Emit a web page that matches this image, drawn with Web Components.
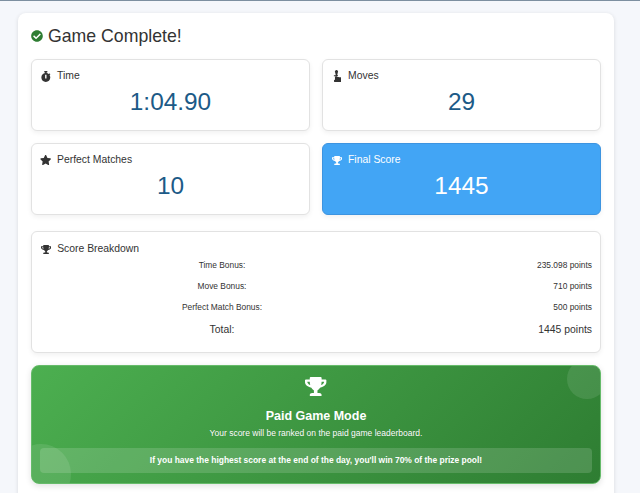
<!DOCTYPE html>
<html>
<head>
<meta charset="utf-8">
<title>Game Complete</title>
<style>
  html, body { margin: 0; height: 493px; overflow: hidden; }
  body {
    background: #f5f7fb;
    border-top: 1px solid #7d8fa0;
    font-family: "Liberation Sans", Arial, sans-serif;
    color: #333;
  }
</style>
</head>
<body>
<game-summary>
  <span slot="title">Game Complete!</span>
  <stat-card icon="stopwatch" label="Time" value="1:04.90"></stat-card>
  <stat-card icon="joystick" label="Moves" value="29"></stat-card>
  <stat-card icon="star" label="Perfect Matches" value="10"></stat-card>
  <stat-card icon="trophy" label="Final Score" value="1445" highlight></stat-card>
  <score-breakdown slot="after">
    <score-row label="Time Bonus:" value="235.098 points"></score-row>
    <score-row label="Move Bonus:" value="710 points"></score-row>
    <score-row label="Perfect Match Bonus:" value="500 points"></score-row>
    <score-row label="Total:" value="1445 points" total></score-row>
  </score-breakdown>
  <paid-banner slot="after">
    <span slot="title">Paid Game Mode</span>
    <span slot="subtitle">Your score will be ranked on the paid game leaderboard.</span>
    If you have the highest score at the end of the day, you'll win 70% of the prize pool!
  </paid-banner>
</game-summary>

<script>
const ICONS = {
  check: ['0 0 512 512', 'M504 256c0 136.967-111.033 248-248 248S8 392.967 8 256 119.033 8 256 8s248 111.033 248 248zM227.314 387.314l184-184c6.248-6.248 6.248-16.379 0-22.627l-22.627-22.627c-6.248-6.249-16.379-6.249-22.628 0L216 308.118l-70.059-70.059c-6.248-6.248-16.379-6.248-22.628 0l-22.627 22.627c-6.248 6.248-6.248 16.379 0 22.627l104 104c6.249 6.249 16.379 6.249 22.628.001z'],
  stopwatch: ['0 0 448 512', 'M432 304c0 114.9-93.1 208-208 208S16 418.9 16 304c0-104 76.3-190.2 176-205.5V64h-28c-6.6 0-12-5.4-12-12V12c0-6.6 5.4-12 12-12h120c6.6 0 12 5.4 12 12v40c0 6.6-5.4 12-12 12h-28v34.5c37.5 5.8 71.7 21.6 99.7 44.6l27.5-27.5c4.7-4.7 12.3-4.7 17 0l28.3 28.3c4.7 4.7 4.7 12.3 0 17l-29.4 29.4-.6.6C419.7 223.3 432 262.2 432 304zm-176 36V188.5c0-6.6-5.4-12-12-12h-40c-6.6 0-12 5.4-12 12V340c0 6.6 5.4 12 12 12h40c6.6 0 12-5.4 12-12z'],
  joystick: ['0 0 80 110', 'M30 0a16 16 0 0 1 12 27v9h-2v11h6v10H34v7h12c4 0 7 1 9 3h15c5 0 8 4 8 8v27c0 5-3 8-8 8H14c-3 0-5-3-5-6v-8c0-4 3-7 7-7h2V64h4v-7H8V47h16V36h-2v-9A16 16 0 0 1 30 0z'],
  star: ['0 0 576 512', 'M259.3 17.8L194 150.2 47.9 171.5c-26.2 3.8-36.7 36.1-17.7 54.6l105.7 103-25 145.5c-4.5 26.3 23.2 46 46.4 33.7L288 439.6l130.7 68.7c23.2 12.2 50.9-7.4 46.4-33.7l-25-145.5 105.7-103c19-18.5 8.5-50.8-17.7-54.6L382 150.2 316.7 17.8c-11.7-23.6-45.6-23.9-57.4 0z'],
  trophy: ['0 0 576 512', 'M552 64H448V24c0-13.3-10.7-24-24-24H152c-13.3 0-24 10.7-24 24v40H24C10.7 64 0 74.7 0 88v56c0 35.7 22.5 72.4 61.9 100.7 31.5 22.7 69.8 37.1 110 41.7C203.3 338.5 240 360 240 360v72h-48c-35.3 0-64 20.7-64 56v12c0 6.6 5.4 12 12 12h296c6.6 0 12-5.4 12-12v-12c0-35.3-28.7-56-64-56h-48v-72s36.7-21.5 68.1-73.6c40.3-4.6 78.7-19 110-41.7 39.3-28.3 61.9-65 61.9-100.7V88c0-13.3-10.7-24-24-24zM99.3 192.8C74.9 175.2 64 155.6 64 144v-16h64.2c1 32.6 5.8 61.2 12.8 86.2-15.1-5.2-29.2-12.4-41.7-21.4zM512 144c0 16.1-17.7 36.1-35.3 48.8-12.5 9-26.7 16.2-41.8 21.4 7-25 11.8-53.6 12.8-86.2H512v16z']
};
const ICON_HEIGHT = { stopwatch: 11, joystick: 12, star: 10, trophy: 9 };

function iconSvg(name, height, color) {
  const [box, d] = ICONS[name];
  return `<svg viewBox="${box}" height="${height}" fill="${color}" style="display:block;flex:none"><path d="${d}"/></svg>`;
}

class GameSummary extends HTMLElement {
  constructor() {
    super();
    this.attachShadow({ mode: "open" });
    this.shadowRoot.innerHTML = `
      <style>
        :host {
          display: block;
          margin: 12px 26px 0 18px;
          padding: 10px 13px 12px;
          height: 500px;
          box-sizing: border-box;
          background: #fff;
          border-radius: 8px;
          box-shadow: 0 1px 4px rgba(0, 0, 0, 0.12);
        }
        h2 {
          display: flex;
          align-items: center;
          gap: 5px;
          margin: 0 0 10px;
          font-size: 17.7px;
          font-weight: 400;
          line-height: 26px;
          color: #333;
        }
        .grid {
          display: grid;
          grid-template-columns: 279px 279px;
          justify-content: space-between;
          gap: 12px;
          margin-bottom: 16px;
        }
        .after {
          display: flex;
          flex-direction: column;
          gap: 12px;
        }
      </style>
      <h2>${iconSvg("check", 12, "#2e7d32")}<slot name="title"></slot></h2>
      <div class="grid"><slot></slot></div>
      <div class="after"><slot name="after"></slot></div>
    `;
  }
}

class StatCard extends HTMLElement {
  connectedCallback() {
    if (this.shadowRoot) return;
    this.attachShadow({ mode: "open" });
    const hi = this.hasAttribute("highlight");
    const name = this.getAttribute("icon");
    this.shadowRoot.innerHTML = `
      <style>
        :host {
          display: block;
          height: 72px;
          box-sizing: border-box;
          padding: 9px 9px 0;
          border: 1px solid ${hi ? "#3d94e0" : "#e2e2e2"};
          border-radius: 6px;
          background: ${hi ? "#42a5f5" : "#fff"};
          color: ${hi ? "#fff" : "#333"};
          box-shadow: 0 2px 5px rgba(0, 0, 0, 0.06);
        }
        .label {
          display: flex;
          align-items: center;
          gap: 6px;
          height: 14px;
          font-size: 10.4px;
          line-height: 14px;
        }
        .icon { width: 10px; display: flex; justify-content: center; }
        .value {
          margin-top: 4px;
          text-align: center;
          font-size: 24.4px;
          line-height: 30px;
          color: ${hi ? "#fff" : "#1c5a87"};
        }
      </style>
      <div class="label">
        <span class="icon">${iconSvg(name, ICON_HEIGHT[name], hi ? "#fff" : "#333")}</span>
        ${this.getAttribute("label")}
      </div>
      <div class="value">${this.getAttribute("value")}</div>
    `;
  }
}

class ScoreBreakdown extends HTMLElement {
  constructor() {
    super();
    this.attachShadow({ mode: "open" });
    this.shadowRoot.innerHTML = `
      <style>
        :host {
          display: block;
          height: 122px;
          box-sizing: border-box;
          padding: 10px 8px 0 9px;
          border: 1px solid #e2e2e2;
          border-radius: 6px;
          background: #fff;
          box-shadow: 0 2px 5px rgba(0, 0, 0, 0.06);
        }
        .head {
          display: flex;
          align-items: center;
          gap: 6px;
          font-size: 10.4px;
          line-height: 14px;
          margin-bottom: -2px;
        }
      </style>
      <div class="head">${iconSvg("trophy", 9, "#333")}Score Breakdown</div>
      <slot></slot>
    `;
  }
}

class ScoreRow extends HTMLElement {
  connectedCallback() {
    if (this.shadowRoot) return;
    this.attachShadow({ mode: "open" });
    const total = this.hasAttribute("total");
    this.shadowRoot.innerHTML = `
      <style>
        :host {
          display: grid;
          grid-template-columns: 362px 1fr;
          align-items: center;
          height: ${total ? 25 : 21}px;
          font-size: ${total ? 10.4 : 8.4}px;
          color: #333;
        }
        .label { text-align: center; }
        .val { text-align: right; }
      </style>
      <span class="label">${this.getAttribute("label")}</span>
      <span class="val">${this.getAttribute("value")}</span>
    `;
  }
}

class PaidBanner extends HTMLElement {
  constructor() {
    super();
    this.attachShadow({ mode: "open" });
    this.shadowRoot.innerHTML = `
      <style>
        :host {
          display: block;
          position: relative;
          overflow: hidden;
          height: 119px;
          box-sizing: border-box;
          padding: 11px 8px 0;
          border: 1px solid #66bb6a;
          border-radius: 8px;
          background: linear-gradient(135deg, #4caf50, #2e7d32);
          color: #fff;
          text-align: center;
          box-shadow: 0 2px 6px rgba(0, 0, 0, 0.12);
        }
        .dot {
          position: absolute;
          border-radius: 50%;
          background: rgba(255, 255, 255, 0.1);
        }
        .dot.a { width: 40px; height: 40px; top: -7px; right: -7px; }
        .dot.b { width: 60px; height: 60px; bottom: -21px; left: -21px; }
        .icon { display: flex; justify-content: center; height: 19px; }
        h3 { margin: 11px 0 0; font-size: 12.5px; line-height: 18px; font-weight: 700; }
        p { margin: 1px 0 0; font-size: 8.5px; line-height: 14px; text-shadow: 0 0 1px rgba(0,0,0,.2); }
        .prize {
          margin-top: 8px;
          height: 25px;
          line-height: 24px;
          border-radius: 4px;
          background: rgba(255, 255, 255, 0.15);
          font-size: 8.45px;
          font-weight: 700;
        }
      </style>
      <span class="dot a"></span>
      <span class="dot b"></span>
      <div class="icon">${iconSvg("trophy", 19, "#fff")}</div>
      <h3><slot name="title"></slot></h3>
      <p><slot name="subtitle"></slot></p>
      <div class="prize"><slot></slot></div>
    `;
  }
}

customElements.define("game-summary", GameSummary);
customElements.define("stat-card", StatCard);
customElements.define("score-breakdown", ScoreBreakdown);
customElements.define("score-row", ScoreRow);
customElements.define("paid-banner", PaidBanner);
</script>
</body>
</html>
